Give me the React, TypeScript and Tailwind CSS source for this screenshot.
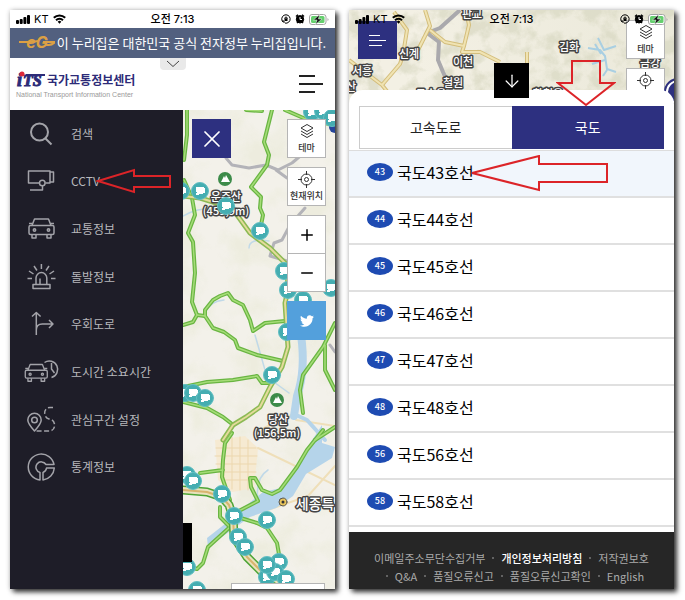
import type { ReactNode } from "react";
import { ArrowDown, Minus, Plus, X } from "lucide-react";
import { FaTwitter } from "react-icons/fa";

interface MenuItem {
  label: string;
  icon: ReactNode;
  marked?: boolean;
}

interface Point {
  x: number;
  y: number;
}

interface MapLabel extends Point {
  text: string;
  size: number;
}

const CarShape = () => (
  <>
    <path d="M9 10.500 11.500 4h14l2.500 6.500" />
    <rect x="6" y="10.500" width="25" height="9" rx="1.500" />
    <path d="M6 8.500h3.500M27.500 8.500h3.500M9 19.500v3.500h4v-3.500M24 19.500v3.500h4v-3.500" />
    <circle cx="11.500" cy="15" r="1.200" />
    <circle cx="25.500" cy="15" r="1.200" />
  </>
);

const menuItems: MenuItem[] = [
  { label: "검색", icon: <g strokeWidth="2"><circle cx="16.500" cy="12" r="8.500" /><path d="m22.500 18.500 6 6" /></g> },
  {
    label: "CCTV",
    marked: true,
    icon: (
      <>
        <path d="M16 16H5.500V4H27v12h-4.500" />
        <path d="M27 5h3.500v10H27" />
        <circle cx="19.300" cy="16" r="2.800" />
        <path d="M19.500 19v4H7" />
      </>
    ),
  },
  { label: "교통정보", icon: <CarShape /> },
  {
    label: "돌발정보",
    icon: (
      <>
        <path d="M13 21v-6a5.400 5.400 0 0 1 10.800 0v6M17 21v-5.500" />
        <rect x="10" y="21.500" width="17" height="4" />
        <path d="M18.400 1v5M11 3l3 4.500M26 3l-3 4.500M6 8l4.500 3M31 8l-4.500 3M4.500 15.500H9M28 15.500h4.500" />
      </>
    ),
  },
  {
    label: "우회도로",
    icon: <path d="M13.300 25V2.500M9 6.500l4.300-4 4.300 4M13.300 20q0-6 6-6H30M26 10l4 4-4 4" />,
  },
  {
    label: "도시간 소요시간",
    icon: (
      <>
        <g transform="translate(-3 3) scale(.88)"><CarShape /></g>
        <path d="M21.500 4.500a8.400 8.400 0 1 1 7 15" />
        <path d="M28.500 5v6l3 4" />
      </>
    ),
  },
  {
    label: "관심구간 설정",
    icon: (
      <>
        <path d="M11.500 25C7 20 4.800 17 4.800 14a6.700 6.700 0 0 1 13.400 0c0 3-2.200 6-6.700 11Z" />
        <circle cx="11.500" cy="14" r="2.800" />
        <path strokeDasharray="5 2.500" d="M30 1.500h-3c-7 0-7 10-1 11.500 7 0 8 12 0 12H12" />
      </>
    ),
  },
  {
    label: "통계정보",
    icon: (
      <>
        <path d="M31 11.500A13 13 0 1 0 17 27v-7.500a5.400 5.400 0 1 1 6-8Z" />
        <path d="M31.300 15H23.500a5.500 5.500 0 0 1-3.500 4.500V27A13 13 0 0 0 31.300 15Z" />
      </>
    ),
  },
];

const routes = ["43", "44", "45", "46", "47", "48", "56", "58"];

const footerLinks = [
  "이메일주소무단수집거부",
  "개인정보처리방침",
  "저작권보호",
  "Q&A",
  "품질오류신고",
  "품질오류신고확인",
  "English",
];

const greenRoads = [
  "M272 110 264 142 269 155 267 165 251 187 261 197 260 208 263 215 260 230",
  "M187 110V135L184 160M184 180 192 198 195 215 188 233 193 242 195 273 192 302 197 315 193 322 183 325",
  "M197 315 205 316 205 310 213 300 220 296 228 293 233 300 243 305 250 320 253 331 265 323 285 321",
  "M205 316 213 328 224 332 235 340 238 348 257 355 283 361",
  "M183 387 207 382 233 380 257 376 262 383 270 383",
  "M183 402 207 408 223 417 232 424",
  "M335 323 323 347 303 375 300 390 303 413M325 345V370L335 390M335 427 315 440",
  "M323 430 307 450 297 467 280 490 272 494 262 490 255 478 250 478 251 487 258 501 233 514",
  "M232 433 225 443 223 460 222 477 230 500M200 473 223 470",
  "M220 507V517L230 527 208 547 203 563 197 569 187 567",
  "M234 516 257 523 267 528 277 543 280 560",
  "M285 110 308 120 335 125M246 110 262 111",
];

const trunkRoads = [
  "M183 196 200 198 223 205 237 215 250 233 270 248 287 265 288 290 285 303 288 347 282 367 270 387 260 407 246 417 233 425 223 440",
];

const expressway = "M183 490 207 492 222 497 229 505 233 517 234 537 247 557 263 573 279 581 297 590";

const cameras: Point[] = [
  { x: 181, y: 191 }, { x: 200, y: 191 }, { x: 226, y: 206 }, { x: 260, y: 231 },
  { x: 284, y: 271 }, { x: 288, y: 290 }, { x: 303, y: 300 }, { x: 331, y: 288 },
  { x: 287, y: 332 }, { x: 272, y: 375 }, { x: 185, y: 393 }, { x: 193, y: 393 },
  { x: 205, y: 398 }, { x: 187, y: 475 }, { x: 193, y: 481 }, { x: 222, y: 494 },
  { x: 234, y: 516 }, { x: 267, y: 520 }, { x: 238, y: 537 }, { x: 245, y: 547 },
  { x: 267, y: 577 }, { x: 279, y: 562 }, { x: 275, y: 572 }, { x: 267, y: 565 },
  { x: 286, y: 579 }, { x: 187, y: 567 }, { x: 197, y: 590 }, { x: 312, y: 112 },
  { x: 323, y: 111 }, { x: 332, y: 118 },
];

const cityLabels: MapLabel[] = [
  { text: "운주산", x: 226, y: 201, size: 11 },
  { text: "(459,9m)", x: 226, y: 215, size: 11 },
  { text: "당산", x: 278, y: 424, size: 11 },
  { text: "(156,5m)", x: 277, y: 437, size: 11 },
  { text: "세종특", x: 315, y: 509, size: 14 },
];

const northLabels: MapLabel[] = [
  { text: "판교", x: 472, y: 18, size: 11 },
  { text: "신계", x: 409, y: 58, size: 11 },
  { text: "이천", x: 463, y: 66, size: 11 },
  { text: "서흥", x: 362, y: 75, size: 11 },
  { text: "산", x: 351, y: 91, size: 11 },
  { text: "철원", x: 453, y: 87, size: 11 },
  { text: "동송읍", x: 431, y: 98, size: 11 },
  { text: "김화", x: 569, y: 51, size: 11 },
  { text: "금강", x: 650, y: 67, size: 11 },
  { text: "화천읍", x: 548, y: 98, size: 11 },
];

function LabelLayer({ labels }: { labels: MapLabel[] }) {
  return (
    <g textAnchor="middle" fontWeight="500" fill="#fff" stroke="#444" strokeWidth="3" strokeLinejoin="round" paintOrder="stroke">
      {labels.map((l) => (
        <text key={l.text} x={l.x} y={l.y} fontSize={l.size}>{l.text}</text>
      ))}
    </g>
  );
}

function CityMap() {
  return (
    <svg viewBox="183 110 152 479" preserveAspectRatio="xMidYMin slice" className="absolute inset-0 h-full w-full" fill="none" strokeLinejoin="round" strokeLinecap="round">
      <defs>
        <filter id="hills" x="0" y="0" width="100%" height="100%">
          <feTurbulence type="fractalNoise" baseFrequency="0.030" numOctaves="4" seed="8" />
          <feColorMatrix values="0 0 0 0 .83  0 0 0 0 .83  0 0 0 0 .70  3 0 0 0 -1.300" />
        </filter>
      </defs>
      <rect x="183" y="110" width="152" height="479" fill="#f3f1ea" />
      <rect x="183" y="110" width="152" height="479" filter="url(#hills)" opacity=".7" />
      <path d="M215 440 245 436 258 448 254 488 232 492 218 480Z" fill="#f6ead2" />
      <path d="M216 448h40M215 456h42M216 464h40M218 472h38M222 480h32M224 438v46M232 437v52M240 437v53M248 440v50" stroke="#ecd7ae" />
      <path d="M258 448 335 485M296 420 335 426M262 512 308 496 335 466M295 413 260 430" stroke="#efdfb9" strokeWidth="2" />
      {/* rivers */}
      <path d="M301 335Q306 370 297 396L294 416" stroke="#b5d4ea" strokeWidth="8" />
      <path d="M294 414 307 420 325 440" stroke="#b5d4ea" strokeWidth="4" />
      <path d="M322 425 307 448 296 470 281 488 263 492 248 504 230 520 207 538 208 547 226 534 250 517 276 508 293 496 306 474 332 458 335 447 322 443Z" fill="#b5d4ea" />
      <path d="M205 313q5-12 19-13M258 500q-3-22 10-30M255 335l12 42 22 16M249 248q0-10 20-7M183 216q26-15 60 0" stroke="#c0d9e8" strokeWidth="1.500" />
      {/* district border */}
      <path d="M226 158 232 165 249 168 266 165 278 170 292 163 305 152M276 170 287 178M305 208 290 225 282 240 274 243 270 256 287 261M330 345 335 352" stroke="#b3b3b8" strokeWidth="3" />
      {greenRoads.map((d) => <path key={d} d={d} stroke="#69b542" strokeWidth="4" />)}
      {greenRoads.map((d) => <path key={d} d={d} stroke="#a5dc78" strokeWidth="1.500" />)}
      {trunkRoads.map((d) => <path key={d} d={d} stroke="#8cba54" strokeWidth="5" />)}
      {trunkRoads.map((d) => <path key={d} d={d} stroke="#e4db9b" strokeWidth="2" />)}
      <path d={expressway} stroke="#4ea536" strokeWidth="9" />
      <path d={expressway} stroke="#e8e2bd" strokeWidth="6" />
      <path d={expressway} stroke="#d8b46e" strokeWidth="2" />
      {[{ x: 225, y: 179 }, { x: 277, y: 400 }].map((m) => (
        <g key={m.y}>
          <circle cx={m.x} cy={m.y} r="7" fill="#3c8b49" />
          <path d={`M${m.x - 4} ${m.y + 3}l3-6 1 2 1-3 4 7Z`} fill="#fff" />
        </g>
      ))}
      <circle cx="283" cy="502" r="4" fill="#e9c45a" stroke="#555" />
      <circle cx="283" cy="502" r="1.500" fill="#333" />
      <LabelLayer labels={cityLabels} />
      <circle cx="335" cy="127" r="6" fill="#26459a" />
      {cameras.map((c) => (
        <g key={`${c.x}-${c.y}`}>
          <circle cx={c.x} cy={c.y} r="8.500" fill="#45adb1" stroke="#62bfc3" />
          <path d={`M${c.x - 4} ${c.y - 4}h8v1h1v5h-2v1h-4v1h-3v-2h1v-1h-1Z`} fill="#fff" />
        </g>
      ))}
    </svg>
  );
}

function NorthMap() {
  return (
    <svg viewBox="349 10 325 100" preserveAspectRatio="xMidYMin slice" className="absolute inset-x-0 top-0 h-[100px] w-full" fill="none" strokeLinejoin="round">
      <defs>
        <filter id="ridges" x="0" y="0" width="100%" height="100%">
          <feTurbulence type="fractalNoise" baseFrequency="0.055" numOctaves="5" seed="21" />
          <feColorMatrix values="0 0 0 0 .68  0 0 0 0 .68  0 0 0 0 .53  4 0 0 0 -1.700" />
        </filter>
        <linearGradient id="east">
          <stop offset=".2" stopColor="#f3f0e4" />
          <stop offset="1" stopColor="#ebe9da" />
        </linearGradient>
      </defs>
      <rect x="349" y="10" width="325" height="100" fill="url(#east)" />
      <rect x="349" y="10" width="325" height="100" filter="url(#ridges)" opacity=".65" />
      <path d="M460 10 440 28 427 33 439 42 438 60 443 72 452 92" stroke="#aaa9ad" strokeWidth="4" />
      <path d="M394 12 407 30 403 55 400 64 382 85 349 60M425 10 430 26 418 50M430 30 445 42 464 46 469 25 466 10M464 46 462 52 480 52 500 62M527 52V66M382 85 390 95" stroke="#d3bd7b" strokeWidth="4" />
      <path d="M394 12 407 30 403 55 400 64 382 85 349 60M425 10 430 26 418 50M430 30 445 42 464 46 469 25 466 10M464 46 462 52 480 52 500 62M527 52V66M382 85 390 95" stroke="#f0e3b2" strokeWidth="2" />
      <path d="M588 48 600 50 605 56 607 69 616 72M598 38 604 50 616 46M605 60 592 64M607 70 603 76M601 54 595 44" stroke="#a9cfe2" strokeWidth="2" />
      <LabelLayer labels={northLabels} />
    </svg>
  );
}

function StatusBar() {
  return (
    <div className="relative z-20 grid h-[18px] grid-cols-3 items-center px-[6px] font-['Inter','Noto_Sans_CJK_KR',sans-serif] text-[11px] leading-none font-medium text-black">
      <div className="flex items-center gap-1">
        <svg width="14" height="9" viewBox="0 0 14 9" fill="currentColor">
          <rect y="5" width="3" height="4" rx="1" />
          <rect x="3.700" y="4" width="3" height="5" rx="1" />
          <rect x="7.400" y="2" width="3" height="7" rx="1" />
          <rect x="11" width="3" height="9" rx="1" />
        </svg>
        <span className="font-normal">KT</span>
        <svg width="13" height="10" viewBox="0 0 13 10" fill="none" stroke="currentColor" strokeWidth="2">
          <path d="M.800 3.800a8.200 8.200 0 0 1 11.400 0M3 6.300a5 5 0 0 1 7 0" />
          <path d="m4.700 7.700 1.800 2 1.800-2a2.600 2.600 0 0 0-3.600 0Z" fill="currentColor" stroke="none" />
        </svg>
      </div>
      <div className="text-center">오전 7:13</div>
      <div className="flex items-center justify-end gap-1">
        <svg width="10" height="10" viewBox="0 0 10 10" fill="none" stroke="currentColor">
          <path d="M2 8a4.200 4.200 0 1 1 2 1.100M2 8v-2M2 8h2" />
          <path d="M4 5V4a1 1 0 0 1 2 0v1" />
          <rect x="3.500" y="4.500" width="3" height="2.500" fill="currentColor" stroke="none" />
        </svg>
        <svg width="10" height="10" viewBox="0 0 10 10" fill="none" stroke="currentColor">
          <circle cx="5" cy="5.300" r="3.700" fill="currentColor" />
          <path d="m1 2.500 2-1.700M9 2.500 7 .800M2 9l1-1M8 9 7 8" strokeWidth="1.500" />
          <path d="M5 3v2.500h2" stroke="#fff" />
        </svg>
        <svg width="20" height="11" viewBox="0 0 20 11" fill="none">
          <rect x=".500" y=".500" width="16.500" height="10" rx="2.500" stroke="#a4a4a4" fill="#fff" />
          <rect x="2" y="2" width="13.500" height="7" rx="1.500" fill="#65cf6e" />
          <path d="M18.500 4v3q1-.500 1-1.500t-1-1.500Z" fill="#a4a4a4" />
          <path d="M10.500.500 4.500 6h3.500l-1.500 4.500L13 5H9.500Z" fill="#111" stroke="#fff" strokeWidth=".500" />
        </svg>
      </div>
    </div>
  );
}

function MapButton({ label, children }: { label: string; children: ReactNode }) {
  return (
    <button className="flex h-[39px] w-[39px] flex-col items-center justify-center gap-[2px] border border-[#b5b5b5] bg-white text-[#333]">
      {children}
      <span className="text-[9px] leading-[12px] font-medium whitespace-nowrap">{label}</span>
    </button>
  );
}

function LayersIcon() {
  return (
    <svg width="16" height="17" viewBox="0 0 16 17" fill="none" stroke="currentColor" strokeLinejoin="round">
      <path d="m8 1.500 6 3.500-6 3.500L2 5ZM2 8l6 3.500L14 8M2 11l6 3.500 6-3.500" />
    </svg>
  );
}

function TargetIcon() {
  return (
    <svg width="17" height="17" viewBox="0 0 17 17" fill="none" stroke="currentColor">
      <circle cx="8.500" cy="8.500" r="5.500" />
      <circle cx="8.500" cy="8.500" r="2" />
      <path d="M8.500 0v4M8.500 13v4M0 8.500h4M13 8.500h4" />
    </svg>
  );
}

function GovBanner() {
  return (
    <div className="relative flex h-[30px] items-center justify-center gap-[2px] bg-[#52607f] text-[13px] whitespace-nowrap text-white">
      <svg width="36" height="24" viewBox="0 0 36 24" className="shrink-0">
        <path d="M0 11h11q3 0 8-1M24 11h12q-3 3-6 3h-3" stroke="#dca044" strokeWidth="2" fill="none" />
        <text x="18" y="17" textAnchor="middle" fontFamily="Inter, sans-serif" fontSize="16" fontWeight="700" fontStyle="italic" fill="#dca044">eG</text>
      </svg>
      <span>이 누리집은 대한민국 공식 전자정부 누리집입니다.</span>
      <button aria-label="펼치기" className="absolute top-full left-1/2 z-10 flex h-3 w-[26px] -translate-x-1/2 items-center justify-center rounded-b bg-[#e9e9e9] text-[#444]">
        <svg width="14" height="8" viewBox="0 0 14 8" fill="none" stroke="currentColor"><path d="m1 1 6 5.500L13 1" /></svg>
      </button>
    </div>
  );
}

function MenuPhone() {
  return (
    <section className="flex min-w-0 flex-col overflow-hidden bg-white shadow-[3px_3px_5px_rgba(0,0,0,0.8),0_0_5px_rgba(0,0,0,0.2)]">
      <StatusBar />
      <GovBanner />
      <header className="flex h-[52px] items-center justify-between pr-3 pl-[6px]">
        <a href="#" className="flex flex-col">
          <span className="flex items-center gap-[2px]">
            <svg width="29" height="20" viewBox="0 0 29 20" className="overflow-visible">
              <g fontFamily="Liberation Serif, serif" fontWeight="700" fontStyle="italic" fill="#2d2b78" stroke="#2d2b78">
                <text x="1" y="16" fontSize="18">i</text>
                <text x="7" y="16" fontSize="16">TS</text>
              </g>
              <path d="M10 5h19" stroke="#2d2b78" strokeWidth="2" />
              <circle cx="6" cy="4" r="2.500" fill="#dd2839" />
            </svg>
            <span className="text-[12px] leading-[18px] font-bold text-[#2d2b78]">국가교통정보센터</span>
          </span>
          <span className="font-['Liberation_Sans',sans-serif] text-[7px] leading-[9px] text-[#999]">National Transport Information Center</span>
        </a>
        <button aria-label="메뉴" className="flex flex-col gap-[6px]">
          <span className="h-[2px] w-4 bg-[#222]" />
          <span className="h-[2px] w-6 bg-[#222]" />
          <span className="h-[2px] w-4 bg-[#222]" />
        </button>
      </header>
      <div className="flex flex-1">
        <nav className="w-[173px] shrink-0 bg-[#1e1d28]">
          <ul className="grid h-[381px] auto-rows-fr">
            {menuItems.map((item) => (
              <li key={item.label} className="relative flex items-center">
                <a href="#" className="flex items-center gap-[10px] pl-[13px] text-[12px] text-[#b8b8bc]">
                  <svg width="38" height="28" viewBox="0 0 38 28" fill="none" stroke="#a3a3a9" strokeWidth="1.500" strokeLinejoin="round">
                    {item.icon}
                  </svg>
                  {item.label}
                </a>
                {item.marked && (
                  <svg width="76" height="26" viewBox="0 0 76 26" fill="none" stroke="#dc2428" strokeWidth="2" className="absolute top-1/2 left-[86px] -translate-y-1/2">
                    <path d="M2 13 38 2v6h36v11H38v5Z" />
                  </svg>
                )}
              </li>
            ))}
          </ul>
        </nav>
        <div className="relative min-h-[479px] flex-1 overflow-hidden">
          <CityMap />
          <button aria-label="닫기" className="absolute top-[9px] left-[9px] flex h-[39px] w-[39px] items-center justify-center bg-[#2d3080] text-white">
            <X size={28} strokeWidth={1.5} />
          </button>
          <div className="absolute top-[9px] right-[9px] flex flex-col gap-[9px]">
            <MapButton label="테마"><LayersIcon /></MapButton>
            <MapButton label="현재위치"><TargetIcon /></MapButton>
            <div className="flex flex-col border border-[#b5b5b5] bg-white text-black">
              <button aria-label="확대" className="flex h-[38px] w-[37px] items-center justify-center border-b border-[#b5b5b5]"><Plus size={18} /></button>
              <button aria-label="축소" className="flex h-[37px] w-[37px] items-center justify-center"><Minus size={18} /></button>
            </div>
            <button aria-label="트위터" className="flex h-[39px] w-[39px] items-center justify-center bg-[#53a0dc] text-white"><FaTwitter size={14} /></button>
          </div>
          <div className="absolute bottom-[27px] left-0 h-[39px] w-[9px] bg-black" />
          <div className="absolute right-[10px] bottom-0 h-[6px] w-[94px] border border-b-0 border-[#b5b5b5] bg-white" />
        </div>
      </div>
    </section>
  );
}

function RoutePhone() {
  return (
    <section className="relative flex min-w-0 flex-col overflow-hidden bg-white shadow-[3px_3px_5px_rgba(0,0,0,0.8),0_0_5px_rgba(0,0,0,0.2)]">
      <NorthMap />
      <div className="relative h-20">
        <StatusBar />
        <button aria-label="메뉴" className="absolute top-[11px] left-[9px] flex h-[38px] w-[39px] flex-col justify-center gap-1 bg-[#2d3080] pl-[11px]">
          <span className="h-px w-[11px] bg-white" />
          <span className="h-px w-[17px] bg-white" />
          <span className="h-px w-[13px] bg-white" />
        </button>
        <div className="absolute top-[10px] right-[9px] flex flex-col gap-[9px]">
          <MapButton label="테마"><LayersIcon /></MapButton>
          <MapButton label="현재위치"><TargetIcon /></MapButton>
        </div>
        <div className="absolute top-[70px] -right-4 h-6 w-6 rounded-full border-2 border-white bg-[#2d3080] outline-2 outline-[#2d3080]" />
        <button aria-label="내리기" className="absolute top-[53px] left-[145px] z-20 flex h-[35px] w-[35px] items-center justify-center bg-black text-white">
          <ArrowDown size={20} strokeWidth={1.5} />
        </button>
        <svg width="60" height="48" viewBox="0 0 60 48" fill="none" stroke="#dc2428" strokeWidth="2" className="absolute top-[49px] right-[58px] z-20">
          <path d="M30 46 2 24h14V2h28v22h14Z" />
        </svg>
      </div>
      <div className="relative z-10 flex-1 rounded-t-[14px] bg-white pt-4 pb-[5px]">
        <div role="tablist" className="mx-[10px] mb-px grid h-[43px] grid-cols-2 text-[14px]">
          <button role="tab" aria-selected="false" className="border border-r-0 border-[#ccc] text-[#222]">고속도로</button>
          <button role="tab" aria-selected="true" className="bg-[#2d3080] text-white">국도</button>
        </div>
        <ul className="border-t border-[#ddd]">
          {routes.map((no, i) => (
            <li key={no} className={`relative flex h-[47px] items-center border-b-2 border-[#e0e0e0] pb-[3px] ${i === 0 ? "bg-[#f1f6fc]" : "bg-white"}`}>
              <a href="#" className="flex items-center gap-1 pl-[18px] text-[16px] text-black">
                <span className="flex h-[18px] w-[26px] items-center justify-center rounded-[50%] bg-[#1e4bb2] text-[9px] font-medium text-white">{no}</span>
                국도{no}호선
              </a>
              {i === 0 && (
                <svg width="139" height="38" viewBox="0 0 139 38" fill="none" stroke="#dc2428" strokeWidth="2" className="absolute top-1/2 left-[121px] -translate-y-1/2">
                  <path d="M2 18 69 1v8h68v18H69v8Z" />
                </svg>
              )}
            </li>
          ))}
        </ul>
      </div>
      <footer className="relative z-10 bg-[#262626] px-5 pt-[17px] pb-1">
        <ul className="flex flex-wrap justify-center text-[11px] leading-[18px] text-[#aaa]">
          {footerLinks.map((text, i) => (
            <li key={text} className="flex items-center">
              {i > 0 && <span className="mx-[7px] h-[2px] w-[2px] rounded-full bg-[#777]" />}
              <a href="#" className={text === "개인정보처리방침" ? "font-medium text-white" : ""}>{text}</a>
            </li>
          ))}
        </ul>
      </footer>
    </section>
  );
}

export default function App() {
  return (
    <main className="grid min-h-screen grid-cols-2 gap-[14px] bg-white pt-[10px] pr-[11px] pb-[11px] pl-[10px] font-['Noto_Sans_CJK_KR',sans-serif]">
      <MenuPhone />
      <RoutePhone />
    </main>
  );
}
